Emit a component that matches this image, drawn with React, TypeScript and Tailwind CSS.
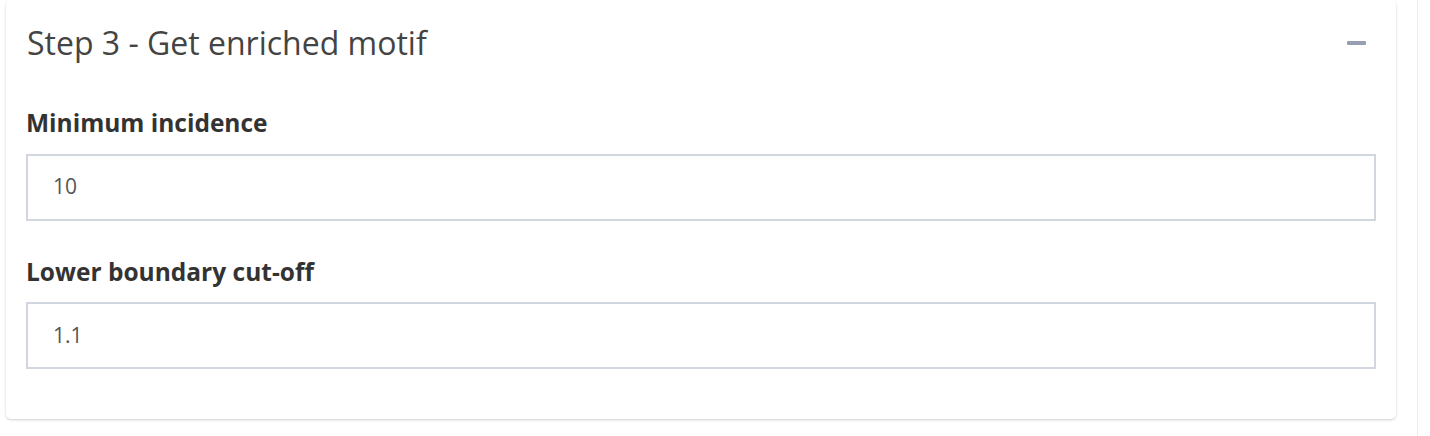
import React from "react";

export default function App() {
  return (
    <div className="w-[1430px] h-[436px] bg-white relative overflow-hidden" style={{ fontFamily: '"Open Sans", "Lato", sans-serif' }}>
      <div className="absolute left-[1417px] top-0 bottom-0 w-px bg-[#ececec]" />
      <div className="ml-[6px] w-[1390px] h-[419px] bg-white rounded-[5px] shadow-[0_1px_3px_rgba(0,0,0,0.12),0_1px_2px_rgba(0,0,0,0.08)] flex flex-col">
        <div className="flex items-center justify-between pl-[21px] pr-[30px] h-[86px]">
          <h3 className="text-[32px] text-[#444] font-normal leading-none">Step 3 - Get enriched motif</h3>
          <div className="w-[19px] h-[4px] bg-[#97a0b3] rounded-[1px]" />
        </div>
        <div className="px-[20px] flex flex-col">
          <label className="text-[24.5px] font-bold text-[#333] leading-none mt-[25px]">Minimum incidence</label>
          <div className="mt-[18px] h-[67px] border-2 border-[#d2d6de] flex items-center pl-[25px] text-[21px] text-[#555]">10</div>
          <label className="text-[24.5px] font-bold text-[#333] leading-none mt-[39px]">Lower boundary cut-off</label>
          <div className="mt-[18px] h-[67px] border-2 border-[#d2d6de] flex items-center pl-[25px] text-[21px] text-[#555]">1.1</div>
        </div>
      </div>
    </div>
  );
}
